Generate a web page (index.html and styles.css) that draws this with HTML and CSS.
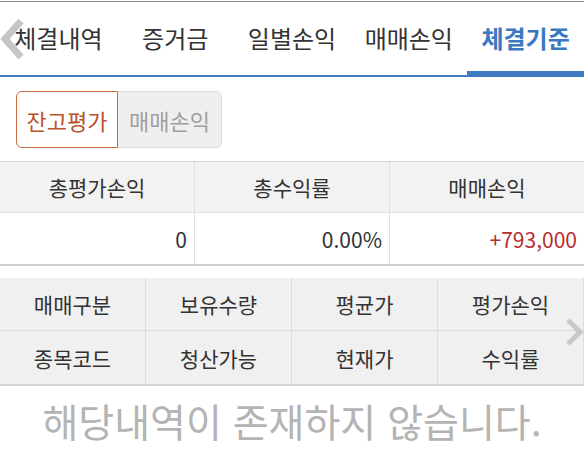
FILE: index.html
```html
<!DOCTYPE html>
<html lang="ko">
<head>
<meta charset="utf-8">
<link rel="stylesheet" href="styles.css">
</head>
<body>
<div class="page">
  <nav class="tabs">
    <span class="tab">체결내역</span>
    <span class="tab">증거금</span>
    <span class="tab">일별손익</span>
    <span class="tab">매매손익</span>
    <span class="tab active">체결기준</span>
    <svg class="chev-left" width="24" height="42" viewBox="0 0 24 42"><path d="M21 3 L5 21 L21 39" fill="none" stroke="#c6c6c6" stroke-width="7"/></svg>
  </nav>

  <div class="segment">
    <span class="seg seg-on">잔고평가</span>
    <span class="seg seg-off">매매손익</span>
  </div>

  <div class="summary">
    <div class="cell head">총평가손익</div>
    <div class="cell head">총수익률</div>
    <div class="cell head">매매손익</div>
    <div class="cell val">0</div>
    <div class="cell val">0.00%</div>
    <div class="cell val plus">+793,000</div>
  </div>

  <div class="list-head">
    <div class="hcell">매매구분</div>
    <div class="hcell">보유수량</div>
    <div class="hcell">평균가</div>
    <div class="hcell">평가손익</div>
    <div class="hcell">종목코드</div>
    <div class="hcell">청산가능</div>
    <div class="hcell">현재가</div>
    <div class="hcell">수익률</div>
    <svg class="chev-right" width="20" height="28" viewBox="0 0 20 28"><path d="M3 2 L15 14 L3 26" fill="none" stroke="#c8c8c8" stroke-width="5"/></svg>
  </div>

  <p class="empty">해당내역이 존재하지 않습니다.</p>
</div>
</body>
</html>
```

FILE: styles.css
```css
html, body {
  margin: 0;
  padding: 0;
  background: #fff;
}
body {
  font-family: "Noto Sans CJK KR", "Noto Sans", sans-serif;
  color: #333;
}
.page {
  width: 584px;
  padding-top: 1px;
}
.tabs {
  position: relative;
  display: grid;
  grid-template-columns: repeat(5, 1fr);
  height: 73px;
  border-top: 1px solid #8a8a8a;
  border-bottom: 2px solid #3d7abf;
}
.tab {
  display: flex;
  align-items: center;
  justify-content: center;
  font-size: 24px;
  color: #333;
  padding-bottom: 3px;
}
.tab.active {
  color: #3a78c2;
  font-weight: bold;
  box-shadow: inset 0 -4px 0 #3d7abf;
}
.chev-left {
  position: absolute;
  left: 0;
  top: 16px;
}
.segment {
  display: flex;
  margin: 14px 0 0 16px;
  width: 206px;
  height: 57px;
}
.seg {
  display: flex;
  align-items: center;
  justify-content: center;
  font-size: 22px;
  box-sizing: border-box;
}
.seg-on {
  width: 102px;
  border: 1px solid #c9693f;
  border-radius: 6px 0 0 6px;
  color: #b8532b;
}
.seg-off {
  width: 104px;
  border: 1px solid #dcdcdc;
  border-left: none;
  border-radius: 0 6px 6px 0;
  background: #efefef;
  color: #a0a0a0;
}
.summary {
  margin-top: 13px;
  display: grid;
  grid-template-columns: 194px 195px 195px;
  border-top: 1px solid #d6d6d6;
  border-bottom: 2px solid #d0d0d0;
}
.cell {
  height: 51px;
  display: flex;
  align-items: center;
  font-size: 21px;
  box-sizing: border-box;
  border-left: 1px solid #e0e0e0;
}
.cell:nth-child(3n+1) {
  border-left: none;
}
.head {
  background: #f2f2f2;
  justify-content: center;
  border-bottom: 1px solid #e0e0e0;
}
.val {
  justify-content: flex-end;
  padding-right: 7px;
  font-size: 21px;
  color: #333;
}
.plus {
  color: #b5302f;
}
.list-head {
  position: relative;
  margin-top: 12px;
  display: grid;
  grid-template-columns: repeat(4, 1fr);
  background: #f0f0f0;
  border-bottom: 2px solid #d4d4d4;
}
.hcell {
  height: 53px;
  display: flex;
  align-items: center;
  justify-content: center;
  font-size: 21px;
  color: #333;
  box-sizing: border-box;
  border-right: 1px solid #dcdcdc;
}
.hcell:nth-child(-n+4) {
  border-bottom: 1px solid #dcdcdc;
}
.chev-right {
  position: absolute;
  right: -1px;
  top: 40px;
}
.empty {
  margin: 0;
  padding-top: 8px;
  text-align: center;
  font-size: 39px;
  color: #b4b4b4;
  line-height: 52px;
}
```
